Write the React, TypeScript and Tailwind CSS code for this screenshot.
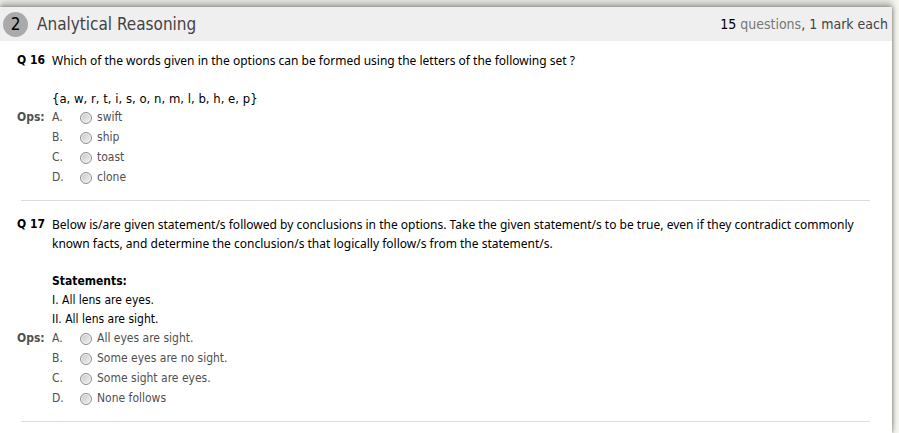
import type { ReactNode } from "react";

type Question = {
  id: number;
  body: ReactNode;
  options: string[];
};

const questions: Question[] = [
  {
    id: 16,
    body: (
      <>
        <p className="font-['Noto_Sans',sans-serif]">
          Which of the words given in the options can be formed using the letters of the following set ?
        </p>
        <p className="mt-[19px] text-[13px] leading-[19px]">{"{a, w, r, t, i, s, o, n, m, l, b, h, e, p}"}</p>
      </>
    ),
    options: ["swift", "ship", "toast", "clone"],
  },
  {
    id: 17,
    body: (
      <>
        <p className="font-['Noto_Sans',sans-serif]">
          Below is/are given statement/s followed by conclusions in the options. Take the given statement/s to be
          true, even if they contradict commonly known facts, and determine the conclusion/s that logically follow/s
          from the statement/s.
        </p>
        <p className="mt-[19px] font-bold">Statements:</p>
        <p>I. All lens are eyes.</p>
        <p>II. All lens are sight.</p>
      </>
    ),
    options: ["All eyes are sight.", "Some eyes are no sight.", "Some sight are eyes.", "None follows"],
  },
];

function QuestionBlock({ id, body, options }: Question) {
  return (
    <section>
      <div className="flex pr-4 pl-[17px] text-black">
        <h2 className="w-[35px] shrink-0 font-bold whitespace-nowrap">Q {id}</h2>
        <div className="min-w-0 flex-1">{body}</div>
      </div>
      <fieldset aria-label={`Options for question ${id}`} className="flex pl-[17px] leading-[18px] text-[#505050]">
        <span className="w-[35px] shrink-0 font-bold whitespace-nowrap">Ops:</span>
        <div>
          {options.map((option, i) => (
            <label key={option} className="flex h-5">
              <span className="w-7">{"ABCD"[i]}.</span>
              <input
                type="radio"
                name={`q${id}`}
                className="mt-1 mr-[5px] size-3 appearance-none rounded-full border border-[#8e8f8f] bg-linear-to-br from-[#c4c8ce] to-[#f2f2f2] shadow-[inset_0_0_0_1px_#f4f4f4] checked:from-[#33657f]"
              />
              <span>{option}</span>
            </label>
          ))}
        </div>
      </fieldset>
      <hr className="mt-3 mr-[22px] mb-3.5 ml-[21px] border-[#dcdcdc]" />
    </section>
  );
}

export default function App() {
  return (
    <div className="min-h-screen overflow-hidden bg-[#f6f6f0] pt-[7px] pr-[7px] font-['DejaVu_Sans_Condensed','DejaVu_Sans',sans-serif] text-xs leading-[19px]">
      <main className="min-h-[calc(100vh-7px)] bg-white shadow-[0_0_5px_#666,0_-7px_6px_#d0d0ca]">
        <header className="mb-2.5 flex h-[34px] items-center bg-[#efefef] pr-1 pl-[3px]">
          <span className="mr-[9px] flex size-[25px] items-center justify-center rounded-full bg-[#aaa] text-[17px] text-black">
            2
          </span>
          <h1 className="flex-1 text-[17px] text-[#444]">Analytical Reasoning</h1>
          <p className="text-sm text-[#444]">
            <span className="text-black">15</span> <span className="text-[#777]">questions</span>, 1 mark each
          </p>
        </header>
        {questions.map((q) => (
          <QuestionBlock key={q.id} {...q} />
        ))}
      </main>
    </div>
  );
}
